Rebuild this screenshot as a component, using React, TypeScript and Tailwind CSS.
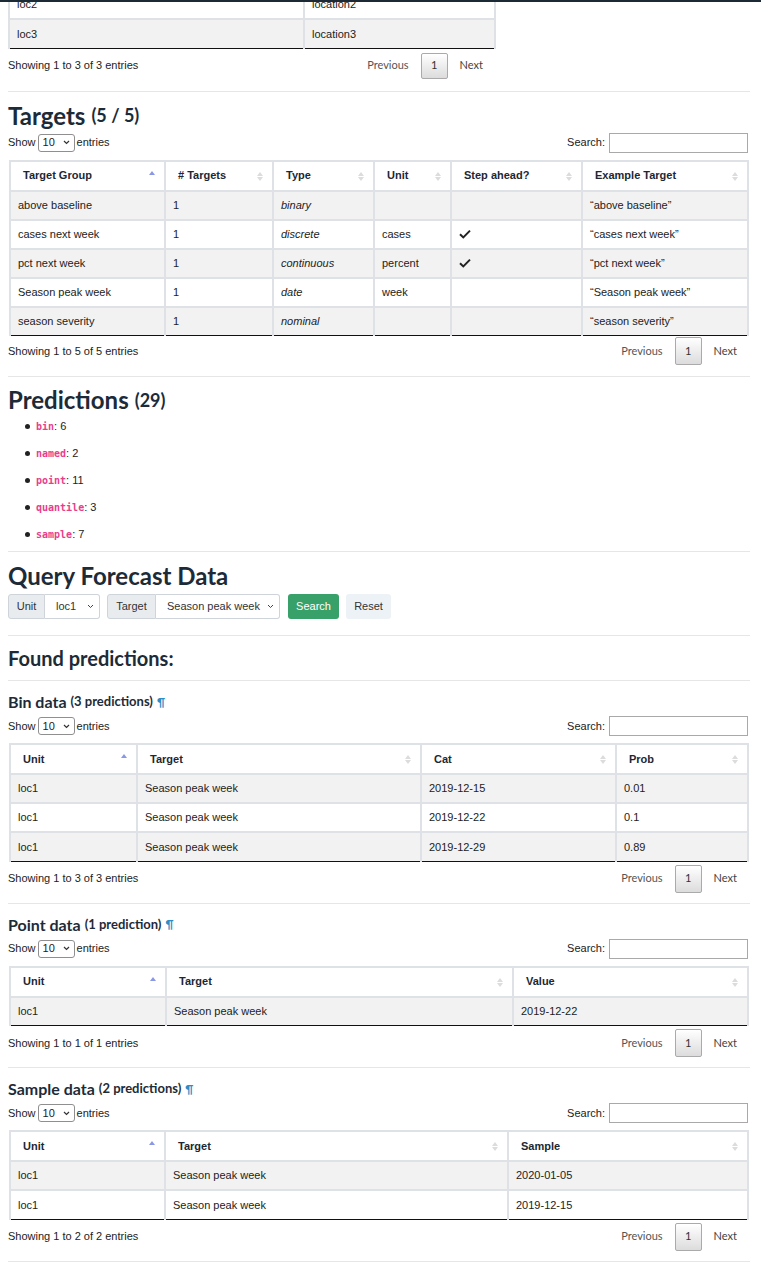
import React from 'react'

const head = { fontFamily: 'Lato, "Noto Sans", sans-serif' }
const body = { fontFamily: '"Liberation Sans", Arial, sans-serif' }

type Col = { label: string; w: string }

function SortIcon({ active }: { active?: boolean }) {
  if (active) {
    return (
      <span className="absolute right-[9px] top-[9px] flex flex-col items-center">
        <svg width="6" height="4" viewBox="0 0 6 4"><path d="M3 0 L6 4 L0 4 Z" fill="#8a97e6" /></svg>
      </span>
    )
  }
  return (
    <span className="absolute right-[9px] top-[10px] flex flex-col items-center gap-[1px]">
      <svg width="6" height="4" viewBox="0 0 6 4"><path d="M3 0 L6 4 L0 4 Z" fill="#dcdcdc" /></svg>
      <svg width="6" height="4" viewBox="0 0 6 4"><path d="M0 0 L6 0 L3 4 Z" fill="#dcdcdc" /></svg>
    </span>
  )
}

function Check() {
  return (
    <svg width="12" height="10" viewBox="0 0 12 10">
      <path d="M1 5.2 L4.3 8.4 L11 1.6" stroke="#222" strokeWidth="2" fill="none" />
    </svg>
  )
}

function Table({ cols, rows }: { cols: Col[]; rows: React.ReactNode[][] }) {
  return (
    <div className="px-[1px]">
      <table className="w-full table-fixed border-collapse text-[11px] text-[#222]" style={body}>
        <thead>
          <tr className="h-[30px]">
            {cols.map((c, i) => (
              <th
                key={c.label}
                className={`relative border-x-2 border-t-2 border-[#dee2e6] border-b border-b-[#111] pl-[12px] text-left font-bold text-[#1d2733] ${c.w}`}
              >
                {c.label}
                <SortIcon active={i === 0} />
              </th>
            ))}
          </tr>
        </thead>
        <tbody>
          {rows.map((r, ri) => (
            <tr key={ri} className={`h-[29px] ${ri % 2 === 0 ? 'bg-[#f2f2f2]' : 'bg-white'}`}>
              {r.map((cell, ci) => (
                <td
                  key={ci}
                  className={`border-2 border-[#dee2e6] px-[7px] ${ri === rows.length - 1 ? 'border-b border-b-[#111]' : ''}`}
                >
                  {cell}
                </td>
              ))}
            </tr>
          ))}
        </tbody>
      </table>
    </div>
  )
}

function Pager({ h }: { h: string }) {
  return (
    <div className="flex items-center text-[11px]" style={head}>
      <span className="px-[12px] text-[#555]">Previous</span>
      <span className={`flex w-[27px] items-center justify-center rounded-[2px] border border-[#aaa] bg-gradient-to-b from-white to-[#dcdcdc] text-[#333] ${h}`}>1</span>
      <span className="pl-[12px] pr-[13px] text-[#444]">Next</span>
    </div>
  )
}

function Info({ text }: { text: string }) {
  return (
    <div className="mt-[3px] flex h-[28px] items-center justify-between" style={body}>
      <span className="text-[11px] text-[#222]">{text}</span>
      <Pager h="h-[28px]" />
    </div>
  )
}

function ShowRow() {
  return (
    <div className="flex h-[20px] items-center justify-between pr-[2px] text-[11px] text-[#222]" style={body}>
      <div className="flex items-center">
        <span>Show</span>
        <span className="mx-[2px] flex h-[18px] w-[37px] items-center justify-between rounded-[3px] border border-[#8f8f8f] bg-white px-[4px]">
          <span>10</span>
          <svg width="7" height="5" viewBox="0 0 7 5"><path d="M1 1 L3.5 3.5 L6 1" stroke="#333" strokeWidth="1.2" fill="none" /></svg>
        </span>
        <span>entries</span>
      </div>
      <div className="flex items-center">
        <span className="mr-[4px]">Search:</span>
        <span className="h-[20px] w-[139px] border border-[#a9a9a9] bg-white" />
      </div>
    </div>
  )
}

function Hr() {
  return <div className="h-px bg-[#e6e6e6]" />
}

function DataSection({ title, count, cols, rows, info }: { title: string; count: string; cols: Col[]; rows: React.ReactNode[][]; info: string }) {
  return (
    <>
      <div className="mt-[11px] flex h-[20px] items-center gap-[4px] text-[#1d2b38]" style={head}>
        <span className="text-[16px] font-bold">{title}</span>
        <span className="text-[13px] font-bold">({count})</span>
        <span className="text-[11px] font-bold text-[#2b8ec6]">¶</span>
      </div>
      <div className="mt-[4px]">
        <ShowRow />
      </div>
      <div className="mt-[7px]">
        <Table cols={cols} rows={rows} />
      </div>
      <Info text={info} />
      <div className="mt-[10px]">
        <Hr />
      </div>
    </>
  )
}

const preds = [
  ['bin', '6'],
  ['named', '2'],
  ['point', '11'],
  ['quantile', '3'],
  ['sample', '7'],
]

const chevron = (
  <svg width="7" height="5" viewBox="0 0 7 5"><path d="M1 1 L3.5 3.5 L6 1" stroke="#444" strokeWidth="1" fill="none" /></svg>
)

export default function App() {
  const tick = <Check />
  return (
    <div className="relative h-[1270px] overflow-hidden bg-white">
      <div className="absolute left-0 right-0 top-0 z-10 h-[2px] bg-[#1b2a35]" />
      <div className="pl-[8px] pr-[11px]">
        {/* previous table */}
        <div className="-mt-[10px] w-[488px]">
          <table className="w-full table-fixed border-collapse text-[11px] text-[#222]" style={body}>
            <tbody>
              <tr className="h-[29px] bg-white">
                <td className="w-[295px] border-2 border-t-0 border-[#dee2e6] px-[7px]">loc2</td>
                <td className="border-2 border-t-0 border-[#dee2e6] px-[7px]">location2</td>
              </tr>
              <tr className="h-[29px] bg-[#f2f2f2]">
                <td className="border-2 border-b border-[#dee2e6] border-b-[#111] px-[7px]">loc3</td>
                <td className="border-2 border-b border-[#dee2e6] border-b-[#111] px-[7px]">location3</td>
              </tr>
            </tbody>
          </table>
          <div className="mt-[4px] flex h-[26px] items-center justify-between" style={body}>
            <span className="text-[11px] text-[#222]">Showing 1 to 3 of 3 entries</span>
            <Pager h="h-[26px]" />
          </div>
        </div>
        <div className="mt-[12px]">
          <Hr />
        </div>

        {/* Targets */}
        <h2 className="mt-[9px] flex h-[30px] items-center gap-[6px] text-[#1d2b38]" style={head}>
          <span className="text-[24px] font-bold">Targets</span>
          <span className="text-[18px] font-bold">(5 / 5)</span>
        </h2>
        <div className="mt-[2px]">
          <ShowRow />
        </div>
        <div className="mt-[7px]">
          <Table
            cols={[
              { label: 'Target Group', w: 'w-[155px]' },
              { label: '# Targets', w: 'w-[108px]' },
              { label: 'Type', w: 'w-[101px]' },
              { label: 'Unit', w: 'w-[77px]' },
              { label: 'Step ahead?', w: 'w-[131px]' },
              { label: 'Example Target', w: '' },
            ]}
            rows={[
              ['above baseline', '1', <i>binary</i>, '', '', '“above baseline”'],
              ['cases next week', '1', <i>discrete</i>, 'cases', tick, '“cases next week”'],
              ['pct next week', '1', <i>continuous</i>, 'percent', tick, '“pct next week”'],
              ['Season peak week', '1', <i>date</i>, 'week', '', '“Season peak week”'],
              ['season severity', '1', <i>nominal</i>, '', '', '“season severity”'],
            ]}
          />
        </div>
        <div className="-mt-[2px]">
          <Info text="Showing 1 to 5 of 5 entries" />
        </div>
        <div className="mt-[11px]">
          <Hr />
        </div>

        {/* Predictions */}
        <h2 className="mt-[9px] flex h-[28px] items-center gap-[6px] text-[#1d2b38]" style={head}>
          <span className="text-[24px] font-bold">Predictions</span>
          <span className="text-[18px] font-bold">(29)</span>
        </h2>
        <ul className="-mt-[1px] pl-[17px] text-[11px] text-[#222]" style={body}>
          {preds.map(([k, v]) => (
            <li key={k} className="flex h-[27px] items-center">
              <span className="mr-[6px] h-[5px] w-[5px] rounded-full bg-[#222]" />
              <code className="text-[10px] font-semibold text-[#e83e8c]" style={{ fontFamily: '"DejaVu Sans Mono", monospace' }}>{k}</code>
              <span>: {v}</span>
            </li>
          ))}
        </ul>
        <div className="mt-[3px]">
          <Hr />
        </div>

        {/* Query */}
        <h2 className="mt-[10px] flex h-[28px] items-center text-[24px] font-bold text-[#1d2b38]" style={head}>
          Query Forecast Data
        </h2>
        <div className="mt-[4px] flex h-[25px] items-center text-[11px] text-[#333]" style={body}>
          <div className="flex h-full">
            <span className="flex w-[37px] items-center justify-center rounded-l-[3px] border border-[#ced4da] bg-[#e9ecef]">Unit</span>
            <span className="flex w-[55px] items-center justify-between rounded-r-[3px] border border-l-0 border-[#ced4da] bg-white pl-[11px] pr-[5px]">
              loc1
              {chevron}
            </span>
          </div>
          <div className="ml-[7px] flex h-full">
            <span className="flex w-[49px] items-center justify-center rounded-l-[3px] border border-[#ced4da] bg-[#e9ecef]">Target</span>
            <span className="flex w-[124px] items-center justify-between rounded-r-[3px] border border-l-0 border-[#ced4da] bg-white pl-[11px] pr-[5px]">
              Season peak week
              {chevron}
            </span>
          </div>
          <span className="ml-[8px] flex h-full w-[51px] items-center justify-center rounded-[3px] bg-[#38a169] text-white">Search</span>
          <span className="ml-[7px] flex h-full w-[45px] items-center justify-center rounded-[3px] bg-[#edf2f7] text-[#333]">Reset</span>
        </div>
        <div className="mt-[16px]">
          <Hr />
        </div>
        <h3 className="mt-[10px] flex h-[24px] items-center text-[20px] font-bold text-[#1d2b38]" style={head}>
          Found predictions:
        </h3>
        <div className="mt-[10px]">
          <Hr />
        </div>

        <DataSection
          title="Bin data"
          count="3 predictions"
          cols={[
            { label: 'Unit', w: 'w-[127px]' },
            { label: 'Target', w: 'w-[284px]' },
            { label: 'Cat', w: 'w-[195px]' },
            { label: 'Prob', w: '' },
          ]}
          rows={[
            ['loc1', 'Season peak week', '2019-12-15', '0.01'],
            ['loc1', 'Season peak week', '2019-12-22', '0.1'],
            ['loc1', 'Season peak week', '2019-12-29', '0.89'],
          ]}
          info="Showing 1 to 3 of 3 entries"
        />
        <DataSection
          title="Point data"
          count="1 prediction"
          cols={[
            { label: 'Unit', w: 'w-[156px]' },
            { label: 'Target', w: 'w-[347px]' },
            { label: 'Value', w: '' },
          ]}
          rows={[['loc1', 'Season peak week', '2019-12-22']]}
          info="Showing 1 to 1 of 1 entries"
        />
        <DataSection
          title="Sample data"
          count="2 predictions"
          cols={[
            { label: 'Unit', w: 'w-[155px]' },
            { label: 'Target', w: 'w-[343px]' },
            { label: 'Sample', w: '' },
          ]}
          rows={[
            ['loc1', 'Season peak week', '2020-01-05'],
            ['loc1', 'Season peak week', '2019-12-15'],
          ]}
          info="Showing 1 to 2 of 2 entries"
        />
      </div>
    </div>
  )
}
